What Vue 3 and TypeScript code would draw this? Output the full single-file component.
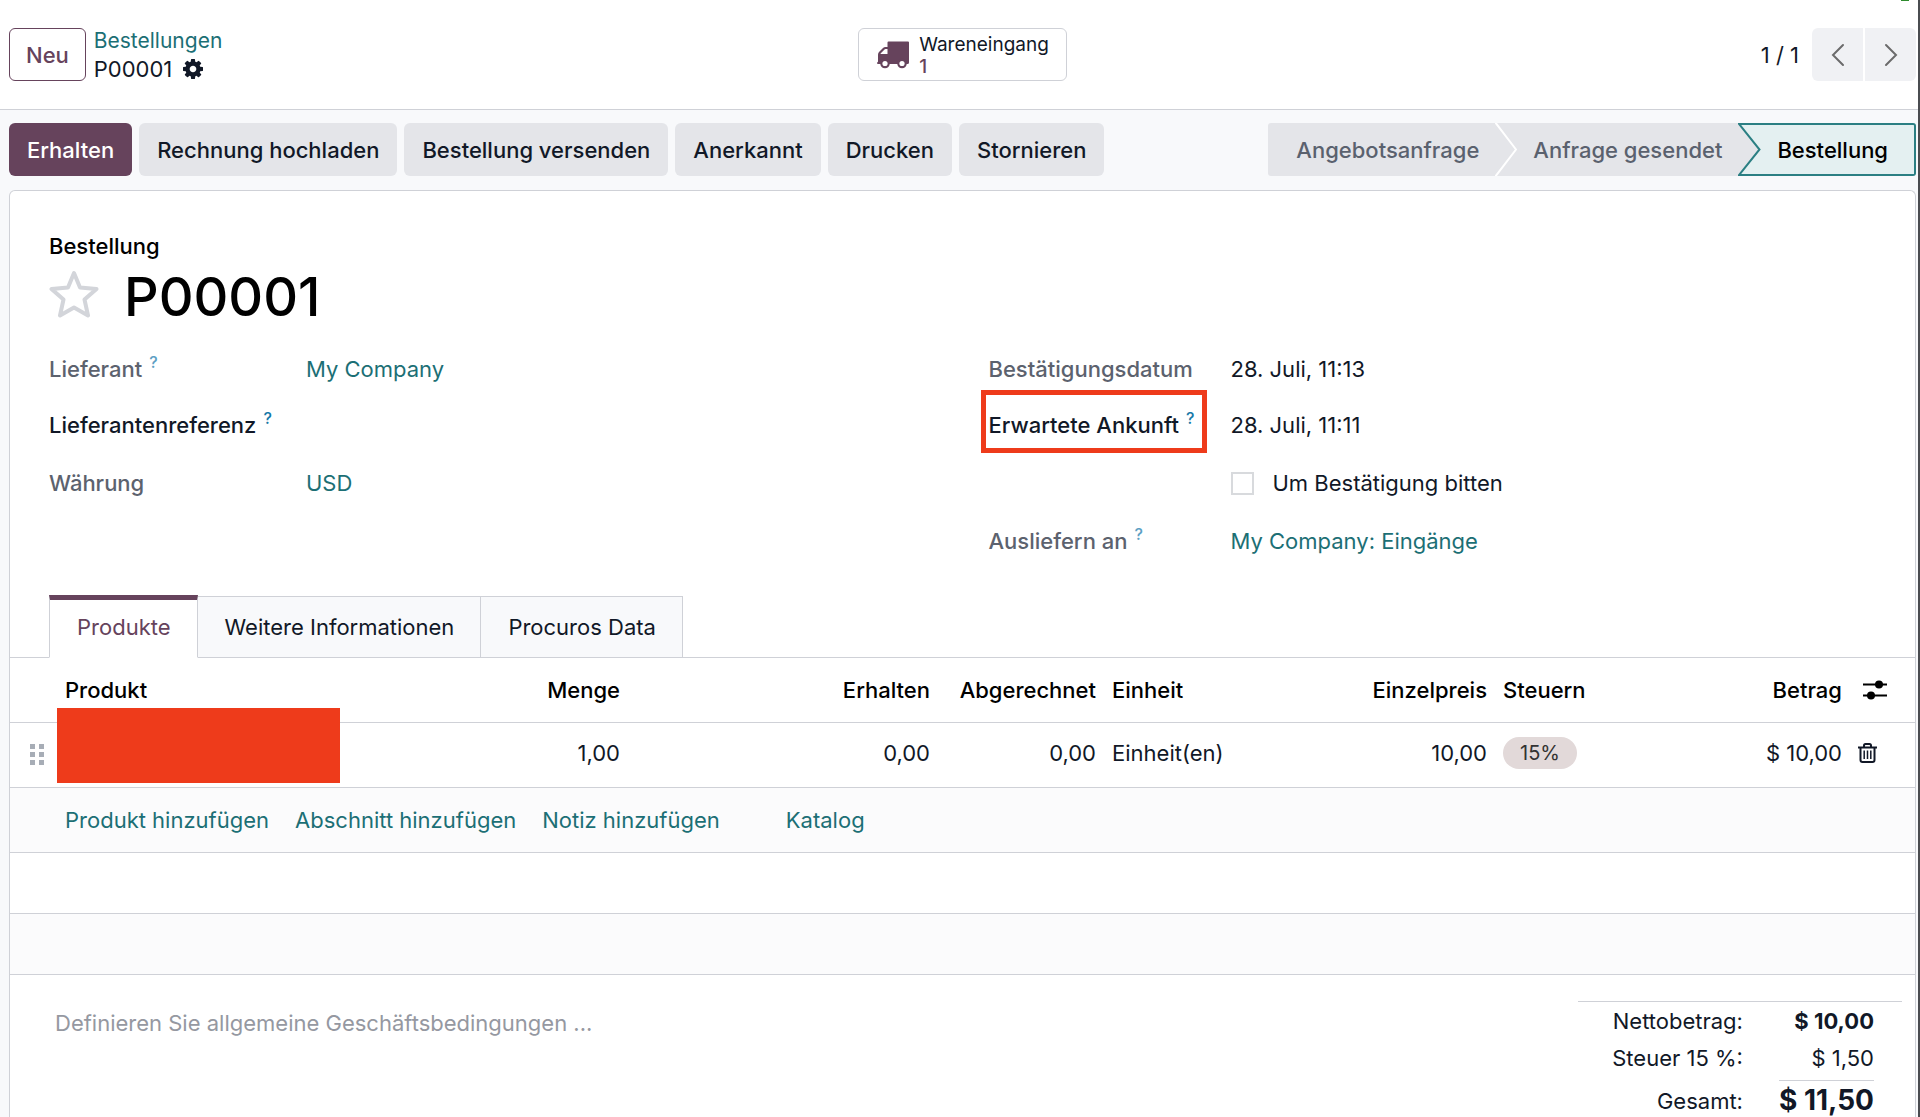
<script setup lang="ts">
import { ref } from 'vue'

const actions = ['Erhalten', 'Rechnung hochladen', 'Bestellung versenden', 'Anerkannt', 'Drucken', 'Stornieren']
const tabs = ['Produkte', 'Weitere Informationen', 'Procuros Data']
const addLinks = ['Produkt hinzufügen', 'Abschnitt hinzufügen', 'Notiz hinzufügen', 'Katalog']
const activeTab = ref(0)
const confirmReminder = ref(false)
const reference = ref('')
const terms = ref('')
</script>

<template>
  <div class="page">
    <header class="top">
      <div class="top-left">
        <button class="btn-new" type="button">Neu</button>
        <nav class="crumbs" aria-label="Navigationspfad">
          <a href="#">Bestellungen</a>
          <div class="crumb-current">
            <span>P00001</span>
            <button class="bare" type="button" aria-label="Aktionen">
              <svg width="20" height="20" viewBox="0 128 1536 1536" fill="currentColor">
                <path d="M1024 896q0-106-75-181t-181-75-181 75-75 181 75 181 181 75 181-75 75-181zm512-109v222q0 12-8 23t-20 13l-185 28q-19 54-39 91 35 50 107 138 10 12 10 25t-9 23q-27 37-99 108t-94 71q-12 0-26-9l-138-108q-44 23-91 38-16 136-29 186-7 28-36 28h-222q-14 0-24.500-8.500t-11.500-21.500l-28-184q-49-16-90-37l-141 107q-10 9-25 9-14 0-25-11-126-114-165-168-7-10-7-23 0-12 8-23 15-21 51-66.500t54-70.500q-27-50-41-99l-183-27q-13-2-21-12.500t-8-23.500v-222q0-12 8-23t19-13l186-28q14-46 39-92-40-57-107-138-10-12-10-24 0-10 9-23 26-36 98.500-107.500t94.500-71.500q13 0 26 10l138 107q44-23 91-38 16-136 29-186 7-28 36-28h222q14 0 24.500 8.500t11.500 21.500l28 184q49 16 90 37l142-107q9-9 24-9 13 0 25 10 129 119 165 170 7 8 7 22 0 12-8 23-15 21-51 66.500t-54 70.500q26 50 41 98l183 28q13 2 21 12.500t8 23.500z" />
              </svg>
            </button>
          </div>
        </nav>
      </div>
      <button class="stat" type="button">
        <svg width="34" height="28" viewBox="0 0 34 28" fill="currentColor">
          <path fill-rule="evenodd" d="M12.500 0.500H32Q33 0.500 33 1.500V21.500Q33 23 31.500 23H2Q1 23 1 22V21.500Q2 21.500 2 20.500V14Q2 12 3 11L7 7Q8 6 9.500 6H11.500V1.500Q11.500 0.500 12.500 0.500ZM4.500 13H11.500V8H9.500Q9 8 8.500 8.500L5 12Q4.500 12.500 4.500 13Z" />
          <circle cx="9" cy="22.500" r="4.800" /><circle cx="26" cy="22.500" r="4.800" />
          <circle cx="9" cy="22.500" r="2.600" fill="#fff" /><circle cx="26" cy="22.500" r="2.600" fill="#fff" />
        </svg>
        <span class="stat-text"><span>Wareneingang</span><span class="stat-value">1</span></span>
      </button>
      <div class="pager">
        <span>1 / 1</span>
        <div class="pager-buttons">
          <button type="button" aria-label="Zurück">
            <svg width="14" height="24" viewBox="0 0 14 24"><path d="M12 2 2 12 12 22" /></svg>
          </button>
          <button type="button" aria-label="Weiter">
            <svg width="14" height="24" viewBox="0 0 14 24"><path d="M2 2 12 12 2 22" /></svg>
          </button>
        </div>
      </div>
      <span class="presence"></span>
    </header>

    <main class="body">
      <div class="control">
        <div class="actions">
          <button v-for="(label, i) in actions" :key="label" type="button" :class="{ primary: i === 0 }">{{ label }}</button>
        </div>
        <div class="status">
          <button class="step first" type="button">Angebotsanfrage</button>
          <svg class="sep" width="22" height="53" viewBox="0 0 22 53">
            <path class="gray" d="M0 0H22V53H0Z" />
            <path class="white" d="M0 -1 21 26.500 0 54" />
          </svg>
          <button class="step" type="button">Anfrage gesendet</button>
          <svg class="sep" width="23" height="53" viewBox="0 0 23 53">
            <path class="gray" d="M0 0H23V53H0Z" />
            <path class="notch" d="M23 1H1L21.500 26.500 1 52H23" />
          </svg>
          <button class="step current" type="button" aria-current="step">Bestellung</button>
        </div>
      </div>

      <section class="sheet">
        <div class="sheet-head">
          <p class="kind">Bestellung</p>
          <div class="title">
            <button class="bare star" type="button" aria-label="Priorität">
              <svg width="50" height="50" viewBox="0 0 50 50">
                <path d="M25 3 31 17.500 47.500 19 35.500 29.500 39 45.500 25 37.500 11 45.500 14.500 29.500 2.500 19 19 17.500Z" />
              </svg>
            </button>
            <h1>P00001</h1>
          </div>
          <div class="groups">
            <dl class="group">
              <dt class="muted">Lieferant<sup>?</sup></dt>
              <dd><a href="#">My Company</a></dd>
              <dt><label for="ref">Lieferantenreferenz<sup>?</sup></label></dt>
              <dd><input id="ref" v-model="reference" class="text" type="text" /></dd>
              <dt class="muted">Währung</dt>
              <dd><a href="#">USD</a></dd>
            </dl>
            <dl class="group right">
              <dt class="muted">Bestätigungsdatum</dt>
              <dd>28. Juli, 11:13</dd>
              <dt><span class="marked">Erwartete Ankunft<sup>?</sup></span></dt>
              <dd>28. Juli, 11:11</dd>
              <dt></dt>
              <dd><label class="check"><input v-model="confirmReminder" type="checkbox" />Um Bestätigung bitten</label></dd>
              <dt class="muted">Ausliefern an<sup>?</sup></dt>
              <dd><a href="#">My Company: Eingänge</a></dd>
            </dl>
          </div>
        </div>

        <div class="tabs" role="tablist">
          <button
            v-for="(tab, i) in tabs"
            :key="tab"
            type="button"
            role="tab"
            :aria-selected="activeTab === i"
            :class="{ active: activeTab === i }"
            @click="activeTab = i"
          >{{ tab }}</button>
        </div>

        <table class="lines">
          <colgroup>
            <col class="c-handle" /><col class="c-product" /><col class="c-qty" /><col class="c-received" /><col class="c-billed" />
            <col class="c-unit" /><col class="c-price" /><col class="c-tax" /><col class="c-amount" /><col class="c-tools" />
          </colgroup>
          <thead>
            <tr class="head">
              <th></th>
              <th>Produkt</th>
              <th class="num">Menge</th>
              <th class="num">Erhalten</th>
              <th class="num">Abgerechnet</th>
              <th>Einheit</th>
              <th class="num">Einzelpreis</th>
              <th>Steuern</th>
              <th class="num">Betrag</th>
              <th class="tool-head">
                <button class="bare" type="button" aria-label="Spalten">
                  <svg width="24" height="20" viewBox="0 0 24 20" fill="currentColor">
                    <path d="M0 3.500H24V5.500H0ZM0 14.500H24V16.500H0Z" />
                    <circle cx="16" cy="4.500" r="4" /><circle cx="8" cy="15.500" r="4" />
                  </svg>
                </button>
              </th>
            </tr>
          </thead>
          <tbody>
            <tr class="item">
              <td class="handle">
                <svg width="14" height="22" viewBox="0 0 14 22" fill="#a7adb6">
                  <path d="M0 0H5V5H0ZM9 0H14V5H9ZM0 8H5V13H0ZM9 8H14V13H9ZM0 16H5V21H0ZM9 16H14V21H9Z" />
                </svg>
              </td>
              <td class="product"><span class="redacted"></span></td>
              <td class="num">1,00</td>
              <td class="num">0,00</td>
              <td class="num">0,00</td>
              <td>Einheit(en)</td>
              <td class="num">10,00</td>
              <td><span class="tag">15%</span></td>
              <td class="num">$ 10,00</td>
              <td class="tool">
                <button class="bare" type="button" aria-label="Löschen">
                  <svg width="19" height="20" viewBox="0 0 19 20" fill="none" stroke="currentColor" stroke-width="2">
                    <path d="M0 4.500H19M6 4V2.500Q6 1 7.500 1H11.500Q13 1 13 2.500V4M2.500 4.500V17Q2.500 19 4.500 19H14.500Q16.500 19 16.500 17V4.500" />
                    <path stroke-width="1.500" d="M6.200 7.500V16M9.500 7.500V16M12.800 7.500V16" />
                  </svg>
                </button>
              </td>
            </tr>
            <tr class="add">
              <td></td>
              <td colspan="9">
                <div class="add-links"><a v-for="link in addLinks" :key="link" href="#">{{ link }}</a></div>
              </td>
            </tr>
            <tr class="blank"><td colspan="10"></td></tr>
            <tr class="blank tinted"><td colspan="10"></td></tr>
          </tbody>
        </table>

        <footer class="summary">
          <textarea v-model="terms" rows="2" aria-label="Geschäftsbedingungen" placeholder="Definieren Sie allgemeine Geschäftsbedingungen ..."></textarea>
          <dl class="totals">
            <dt>Nettobetrag:</dt>
            <dd class="bold">$ 10,00</dd>
            <dt>Steuer 15 %:</dt>
            <dd>$ 1,50</dd>
            <dt class="sum">Gesamt:</dt>
            <dd class="sum grand">$ 11,50</dd>
          </dl>
        </footer>
      </section>
    </main>
  </div>
</template>

<style>
body {
  margin: 0;
}
</style>

<style scoped>
* {
  box-sizing: border-box;
}
.page {
  position: relative;
  display: flex;
  flex-direction: column;
  height: 100vh;
  overflow: hidden;
  border-right: 2px solid #4a4c50;
  background: #fff;
  color: #111827;
  font-family: Inter, "Liberation Sans", sans-serif;
  font-size: 22px;
  line-height: 32px;
}
button,
input,
textarea {
  margin: 0;
  font: inherit;
  color: inherit;
}
button {
  cursor: pointer;
  white-space: nowrap;
}
svg {
  display: block;
  flex: none;
}
a {
  color: #1c6f75;
  text-decoration: none;
}
dl,
dd,
p,
h1 {
  margin: 0;
}
.bare {
  display: block;
  padding: 0;
  border: 0;
  background: none;
}

.top {
  display: grid;
  grid-template-columns: 1fr auto 1fr;
  align-items: center;
  height: 110px;
  padding: 0 2px 0 9px;
  border-bottom: 1px solid #cfd1d7;
}
.top-left,
.crumb-current,
.pager,
.pager-buttons {
  display: flex;
  align-items: center;
}
.top-left {
  gap: 8px;
}
.btn-new {
  height: 53px;
  padding: 0 16px;
  border: 1px solid #66435c;
  border-radius: 6px;
  background: #fff;
  color: #66435c;
  font-weight: 500;
}
.crumbs {
  line-height: 28px;
}
.crumbs a {
  display: block;
  font-size: 21px;
}
.crumb-current {
  gap: 11px;
}
.stat {
  display: flex;
  align-items: center;
  gap: 9px;
  height: 53px;
  padding: 0 17px;
  border: 1px solid #cfd1d7;
  border-radius: 6px;
  background: #fff;
  font-size: 19px;
  line-height: 22px;
}
.stat svg,
.stat-value {
  color: #66435c;
}
.stat-text {
  display: flex;
  flex-direction: column;
  padding-top: 2px;
  text-align: left;
}
.stat-value {
  font-weight: 500;
}
.pager {
  justify-content: flex-end;
  gap: 13px;
}
.pager-buttons {
  gap: 2px;
}
.pager-buttons button {
  display: grid;
  place-items: center;
  width: 51px;
  height: 53px;
  padding: 0;
  border: 0;
  background: #f0f1f4;
}
.pager-buttons button:first-child {
  border-radius: 6px 0 0 6px;
}
.pager-buttons button:last-child {
  border-radius: 0 6px 6px 0;
}
.pager-buttons path {
  fill: none;
  stroke: #6b6b6b;
  stroke-width: 2;
  stroke-linecap: round;
}
.presence {
  position: absolute;
  top: 0;
  right: 9px;
  width: 8px;
  height: 1px;
  background: #2e8b2e;
}

.body {
  display: flex;
  flex: 1;
  flex-direction: column;
  padding: 13px 2px 0 9px;
  background: #f8f9fb;
}
.control {
  display: flex;
  justify-content: space-between;
  margin-bottom: 14px;
}
.actions {
  display: flex;
  gap: 7px;
}
.actions button {
  height: 53px;
  padding: 0 18px;
  border: 0;
  border-radius: 6px;
  background: #e4e5e9;
  font-weight: 500;
}
.actions .primary {
  background: #66435c;
  color: #fff;
}
.status {
  display: flex;
}
.step {
  height: 53px;
  padding: 0 16px;
  border: 0;
  background: #e4e5e9;
  color: #5a616e;
  font-weight: 500;
}
.step.first {
  padding-left: 28px;
  border-radius: 3px 0 0 3px;
}
.step.current {
  padding-right: 26px;
  border: 2px solid #2b7f83;
  border-left: 0;
  border-radius: 0 3px 3px 0;
  background: #e4f0f1;
  color: #000;
}
.gray {
  fill: #e4e5e9;
}
.white {
  fill: none;
  stroke: #fff;
  stroke-width: 2;
}
.notch {
  fill: #e4f0f1;
  stroke: #2b7f83;
  stroke-width: 2;
}

.sheet {
  flex: 1;
  border: 1px solid #cfd1d7;
  border-bottom: 0;
  border-radius: 6px 6px 0 0;
  background: #fff;
}
.sheet-head {
  padding: 39px 39px 12px;
}
.kind {
  color: #000;
  font-weight: 500;
}
.title {
  display: flex;
  align-items: flex-start;
  gap: 25px;
  margin: 3px 0 24px;
}
.star {
  padding-top: 5px;
}
.star path {
  fill: none;
  stroke: #d3d5da;
  stroke-width: 4;
  stroke-linejoin: round;
}
h1 {
  color: #000;
  font-size: 54px;
  font-weight: 500;
  line-height: 64px;
}
.groups {
  display: grid;
  grid-template-columns: 1fr 1fr;
  gap: 52px;
}
.group {
  display: grid;
  grid-template-columns: 257px 1fr;
  grid-template-rows: 56px 58px 58px 58px;
}
.group.right {
  grid-template-columns: 242px 1fr;
}
dt {
  font-weight: 500;
}
.muted {
  color: #5c626e;
}
sup {
  margin-left: 7px;
  color: #1779a8;
  font-size: 16px;
  line-height: 0;
  vertical-align: 9px;
}
.muted sup {
  color: #5e9fc4;
}
.text {
  width: 100%;
  height: 32px;
  padding: 0;
  border: 0;
  outline: 0;
  background: none;
}
.marked {
  position: relative;
  white-space: nowrap;
}
.marked::after {
  position: absolute;
  inset: -22px -13px -15px -8px;
  border: 5px solid #ee3b1b;
  content: "";
}
.check {
  display: flex;
  align-items: center;
  gap: 19px;
}
.check input {
  width: 23px;
  height: 23px;
  border: 2px solid #d8dadd;
  background: #fff;
  appearance: none;
}
.check input:checked {
  background: #66435c;
}

.tabs {
  display: flex;
  height: 63px;
  padding-left: 39px;
  border-bottom: 1px solid #cfd1d7;
}
.tabs button {
  height: 62px;
  margin-top: 1px;
  padding: 0 26px 0 27px;
  border: 1px solid #cfd1d7;
  border-left: 0;
  background: #f8f9fb;
}
.tabs .active {
  height: 63px;
  margin-top: 0;
  padding-bottom: 4px;
  border-top: 5px solid #66435c;
  border-bottom-color: #fff;
  border-left: 1px solid #cfd1d7;
  background: #fff;
  color: #66435c;
}

.lines {
  width: 100%;
  border-collapse: collapse;
  table-layout: fixed;
}
.c-handle { width: 47px; }
.c-qty { width: 120px; }
.c-received { width: 310px; }
.c-billed { width: 166px; }
.c-unit { width: 180px; }
.c-price { width: 211px; }
.c-tax { width: 180px; }
.c-amount { width: 175px; }
.c-tools { width: 65px; }
.lines tr {
  height: 65px;
  border-bottom: 1px solid #cfd1d7;
}
.lines .head {
  height: 64px;
}
th,
td {
  padding: 0 8px;
  text-align: left;
  font-weight: 400;
  white-space: nowrap;
}
th {
  color: #000;
  font-weight: 500;
}
.num {
  text-align: right;
}
.tool-head {
  padding-left: 13px;
}
.item td {
  padding-bottom: 4px;
}
.item .handle {
  padding: 0 0 0 20px;
}
.product {
  position: relative;
}
.redacted {
  position: absolute;
  top: -15px;
  left: 0;
  width: 283px;
  height: 75px;
  background: #ee3b1b;
}
.tag {
  display: inline-block;
  padding: 0 17px;
  border-radius: 16px;
  background: #e2d9d9;
  color: #333;
  font-size: 20px;
}
.add {
  background: #fbfbfc;
}
.add-links {
  display: flex;
  gap: 26px;
}
.add-links a:last-child {
  margin-left: 40px;
}
.lines .blank {
  height: 61px;
}
.tinted {
  background: #fbfbfc;
}

.summary {
  display: flex;
  align-items: flex-start;
  justify-content: space-between;
  padding: 26px 13px 0 45px;
}
textarea {
  flex: 0 1 900px;
  margin-top: 6px;
  padding: 0;
  border: 0;
  outline: 0;
  background: none;
  resize: none;
}
textarea::placeholder {
  color: #9598a1;
  opacity: 1;
}
.totals {
  display: grid;
  grid-template-columns: 1fr auto;
  grid-template-rows: 37px 38px auto;
  column-gap: 36px;
  width: 324px;
  padding: 3px 28px 0 0;
  border-top: 1px solid #cfd1d7;
  text-align: right;
}
.totals dt {
  font-weight: 400;
}
.totals .bold {
  font-weight: 700;
}
.totals .sum {
  padding-top: 5px;
}
.totals .grand {
  padding-top: 3px;
  border-top: 1px solid #cfd1d7;
  font-size: 28px;
  font-weight: 700;
}
</style>
